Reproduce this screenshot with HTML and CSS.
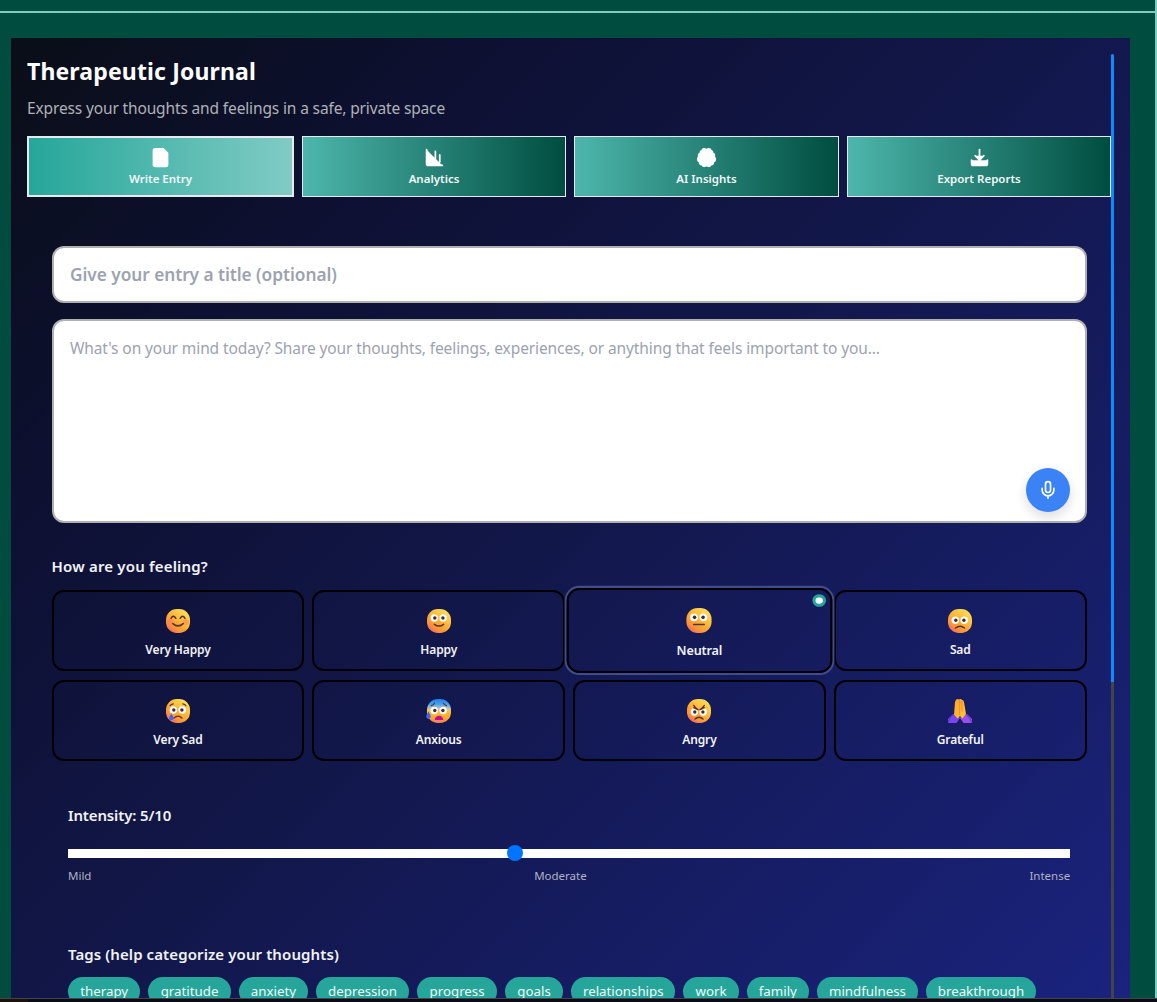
FILE: index.html
```html
<!DOCTYPE html>
<html lang="en">
<head>
<meta charset="utf-8">
<title>Therapeutic Journal</title>
<link rel="stylesheet" href="styles.css">
</head>
<body>
<svg class="defs" width="0" height="0">
  <defs>
    <linearGradient id="skin" x1="0.9" y1="0.05" x2="0.2" y2="1">
      <stop offset="0" stop-color="#ffe45c"/><stop offset="0.5" stop-color="#ffb235"/><stop offset="0.8" stop-color="#fb9038"/><stop offset="1" stop-color="#ee6078"/>
    </linearGradient>
    <linearGradient id="cold" x1="0" y1="0" x2="0" y2="1">
      <stop offset="0" stop-color="#1d80e8"/><stop offset="0.22" stop-color="#4aa0ee"/><stop offset="0.42" stop-color="#c9c9b0"/><stop offset="0.5" stop-color="#ffc02f"/><stop offset="0.8" stop-color="#ffa62f"/><stop offset="1" stop-color="#f2785f"/>
    </linearGradient>
    <linearGradient id="hand" x1="0" y1="0" x2="1" y2="1">
      <stop offset="0" stop-color="#ffa32b"/><stop offset="1" stop-color="#ffc832"/>
    </linearGradient>
    <g id="eyes">
      <circle cx="7.3" cy="9" r="3.7" fill="#fff"/><circle cx="16.2" cy="9" r="3.7" fill="#fff"/>
      <circle cx="7.8" cy="9" r="1.7" fill="#402a32"/><circle cx="15.9" cy="9" r="1.7" fill="#402a32"/>
    </g>
  </defs>
</svg>
<div class="app">
  <div class="topbar"></div>
  <main class="stage">
    <section class="panel">
      <div class="content">
        <h1>Therapeutic Journal</h1>
        <p class="subtitle">Express your thoughts and feelings in a safe, private space</p>
        <nav class="tabs">
          <button class="tab active"><svg viewBox="0 0 24 24"><path d="M15 2H6a2 2 0 0 0-2 2v16a2 2 0 0 0 2 2h12a2 2 0 0 0 2-2V7Z"/></svg><span>Write Entry</span></button>
          <button class="tab"><svg viewBox="0 0 24 24"><path d="M3 3v16a2 2 0 0 0 2 2h16"/><path d="M18 17V9M13 17V5M8 17v-3"/></svg><span>Analytics</span></button>
          <button class="tab"><svg viewBox="0 0 24 24"><path d="M9.5 2A2.5 2.5 0 0 1 12 4.5v15a2.5 2.5 0 0 1-4.96.44 2.5 2.5 0 0 1-2.96-3.08 3 3 0 0 1-.34-5.58 2.5 2.5 0 0 1 1.32-4.24 2.5 2.5 0 0 1 1.98-3A2.5 2.5 0 0 1 9.5 2Z"/><path d="M14.5 2A2.5 2.5 0 0 0 12 4.5v15a2.5 2.5 0 0 0 4.96.44 2.5 2.5 0 0 0 2.96-3.08 3 3 0 0 0 .34-5.58 2.5 2.5 0 0 0-1.32-4.24 2.5 2.5 0 0 0-1.98-3A2.5 2.5 0 0 0 14.5 2Z"/></svg><span>AI Insights</span></button>
          <button class="tab"><svg viewBox="0 0 24 24"><path d="M21 15v4a2 2 0 0 1-2 2H5a2 2 0 0 1-2-2v-4"/><path d="m7 10 5 5 5-5"/><path d="M12 15V3"/></svg><span>Export Reports</span></button>
        </nav>
        <div class="entry">
          <div class="field title-field">Give your entry a title (optional)</div>
          <div class="field body-field">
            <span>What's on your mind today? Share your thoughts, feelings, experiences, or anything that feels important to you...</span>
            <button class="mic" aria-label="Record"><svg viewBox="0 0 24 24"><path d="M12 2a3 3 0 0 0-3 3v7a3 3 0 0 0 6 0V5a3 3 0 0 0-3-3Z"/><path d="M19 10v2a7 7 0 0 1-14 0v-2M12 19v3"/></svg></button>
          </div>
          <h2 class="mood-title">How are you feeling?</h2>
          <div class="moods">
            <button class="mood"><svg viewBox="0 0 24 24"><rect width="24" height="24" rx="10.8" fill="url(#skin)"/><circle cx="4" cy="13" r="3" fill="#ff765d" opacity=".45"/><circle cx="20" cy="13" r="3" fill="#ff765d" opacity=".45"/><path class="ln" d="M5 9.3q2.4-4 4.8 0M14.2 9.3q2.4-4 4.8 0M6.8 14.6q5.2 4.6 10.4 0"/></svg><span>Very Happy</span></button>
            <button class="mood"><svg viewBox="0 0 24 24"><rect width="24" height="24" rx="10.8" fill="url(#skin)"/><use href="#eyes"/><path class="ln" d="M7.4 15.3q4.6 3.6 9.2 0"/></svg><span>Happy</span></button>
            <button class="mood selected"><i class="check"></i><svg viewBox="0 0 24 24"><rect width="24" height="24" rx="10.8" fill="url(#skin)"/><use href="#eyes"/><path class="ln" d="M7 15.8h10"/></svg><span>Neutral</span></button>
            <button class="mood"><svg viewBox="0 0 24 24"><rect width="24" height="24" rx="10.8" fill="url(#skin)"/><use href="#eyes" y="2.3"/><path class="ln" d="M7.5 19q4.5-3.6 9 0"/></svg><span>Sad</span></button>
            <button class="mood"><svg viewBox="0 0 24 24"><rect width="24" height="24" rx="10.8" fill="url(#skin)"/><use href="#eyes" y="2"/><path class="ln thin" d="M4 6.8q1-1.8 3.2-2M20 6.8q-1-1.8-3.2-2M8 19q4-3.6 8 0"/><path d="M5.4 14.5C4.4 16.4 3 17.7 3 19.2c0 2.6 4.6 2.6 4.6 0 0-1.5-1.4-2.7-2.2-4.7Z" fill="#4264f0"/></svg><span>Very Sad</span></button>
            <button class="mood"><svg viewBox="0 0 24 24"><rect width="24" height="24" rx="10.8" fill="url(#cold)"/><use href="#eyes" y="2.5"/><path class="ln thin" d="M4.4 6.7q1.8-.5 3-2.5M19.5 6.7q-1.8-.5-3-2.5"/><path d="M7.8 21a4.2 4.2 0 0 1 8.4 0Z" fill="#c60a91"/><path d="M1.5 12.5C.3 14.8-.8 15.7-.8 17.4c0 3.3 4.6 3.3 4.6 0 0-1.7-1.4-2.9-2.3-4.9Z" fill="#4264f0"/></svg><span>Anxious</span></button>
            <button class="mood"><svg viewBox="0 0 24 24"><rect width="24" height="24" rx="10.8" fill="url(#skin)"/><use href="#eyes" y="4"/><path d="M2 8l8.5 3.2V8H2ZM22 8l-8.5 3.2V8H22Z" fill="#ffb93a"/><path class="ln" d="M7 8.7l4 2M6.8 6.5q1.2 2.6 4.2 4.2M17 8.7l-4 2M17.2 6.5q-1.2 2.6-4.2 4.2M8 20q4-3.6 8 0"/></svg><span>Angry</span></button>
            <button class="mood"><svg viewBox="0 0 24 24"><path d="M0 24v-4l5-5 7 3.5V24Z" fill="#7945ef"/><path d="M24 24v-4l-5-5-7 3.5V24Z" fill="#984ee8"/><path d="M0 24q1-5 5-8M24 24q-2-5-5-8" stroke="#5930d8" fill="none"/><path d="M9.5 19.500 6 15.500 7 3q1-4 4-2.500 1.500-.9 3 .2 2 .3 2.200 3.300L18 15l-3.500 4.500L12 17Z" fill="url(#hand)"/><path d="M11.600 1.200V16M14 1.500v11" stroke="#ef873c" stroke-width=".9" fill="none"/><path d="M8.500 24l3.500-5 3.500 5Z" fill="#171d5e"/></svg><span>Grateful</span></button>
          </div>
          <div class="group intensity">
            <h2>Intensity: 5/10</h2>
            <div class="slider"><i class="thumb"></i></div>
            <div class="scale"><span>Mild</span><span>Moderate</span><span>Intense</span></div>
          </div>
          <div class="group tags-group">
            <h2>Tags (help categorize your thoughts)</h2>
            <div class="tags">
              <span style="width:72.4px">therapy</span><span style="width:82.4px">gratitude</span><span style="width:69.3px">anxiety</span><span style="width:93px">depression</span><span style="width:80px">progress</span><span style="width:58px">goals</span><span style="width:104.4px">relationships</span><span style="width:55.2px">work</span><span style="width:62.3px">family</span><span style="width:101px">mindfulness</span><span style="width:110px">breakthrough</span>
            </div>
          </div>
        </div>
      </div>
      <div class="scrollbar"></div>
    </section>
  </main>
  <footer class="dock"></footer>
</div>
</body>
</html>
```
FILE: styles.css
```css
* { box-sizing: border-box; }
body { margin: 0; background: #004d40; color: #f2f3f7; font-family: "Noto Sans", "Open Sans", sans-serif; overflow: hidden; }
button { font: inherit; color: inherit; background: none; padding: 0; border: 0; }
h1, h2, p { margin: 0; }
.defs { display: block; height: 0; }
.app { height: 1002px; display: flex; flex-direction: column; }
.topbar { height: 13px; flex: none; border-bottom: 2px solid #80cbc4; border-right: 2px solid #80cbc4; }
.stage { height: 985px; flex: none; padding: 25px 25px 0 11px; border-right: 2px solid #80cbc4; }
.panel { height: 960px; padding: 16px 16px 0; display: flex; overflow: hidden; background: linear-gradient(135deg, #0a0e17 0%, #0d1030 22%, #12174a 50%, #1a237e 100%); }
.content { width: 1084px; flex: none; }
.scrollbar { width: 3px; background: linear-gradient(#0a8cff 628px, #444 628px); border-radius: 2px 2px 0 0; }
.dock { height: 4px; flex: none; border-top: 1px solid #454545; background: linear-gradient(90deg, #1c110b 28px, #0a0b18 28px); }

h1 { height: 36px; line-height: 34px; font-size: 23px; font-weight: 700; color: #fff; letter-spacing: .14px; white-space: nowrap; }
.subtitle { height: 46px; padding-top: 6px; font-size: 15.5px; line-height: 24px; color: #b0b1b7; letter-spacing: -.14px; white-space: nowrap; }
.tabs { display: grid; grid-template-columns: 267fr 264fr 265fr 264fr; gap: 8px; height: 61px; }
.tab { display: flex; flex-direction: column; align-items: center; padding-top: 9.5px; border: 1px solid #e6e9ee; background: linear-gradient(90deg, #4db6ac, #004d40); font-size: 11.5px; font-weight: 600; line-height: 20px; color: #f3f8f8; }
.tab.active { border-width: 2px; padding-top: 8.5px; background: linear-gradient(90deg, #26a69a, #80cbc4); }
.tab svg { width: 21px; height: 21px; flex: none; fill: #fff; stroke: #fff; stroke-width: 2; stroke-linecap: round; stroke-linejoin: round; }
.tab span { margin-top: 1.5px; }

.entry { padding: 49px 24.4px 0 24.6px; }
.field { position: relative; border: 2px solid #b0b0b0; border-radius: 12px; background: #fff; color: #9ca3af; padding: 0 16.4px; white-space: nowrap; }
.title-field { height: 57px; line-height: 53px; font-size: 17.3px; font-weight: 600; letter-spacing: -.05px; }
.body-field { height: 204px; margin-top: 16px; padding-top: 15px; font-size: 15.5px; line-height: 24px; letter-spacing: -.1px; }
.mic { position: absolute; right: 14.8px; bottom: 9px; width: 44px; height: 44px; border-radius: 50%; background: #3b82f6; display: grid; place-items: center; box-shadow: 0 5px 12px rgba(0,0,0,.14); }
.mic svg { width: 20px; height: 20px; fill: none; stroke: #fff; stroke-width: 2; stroke-linecap: round; stroke-linejoin: round; }

h2 { font-size: 15px; font-weight: 600; line-height: 24px; white-space: nowrap; letter-spacing: .1px; }
.mood-title { margin-top: 31px; height: 36px; letter-spacing: .18px; }
.moods { display: grid; grid-template-columns: repeat(4, 1fr); grid-auto-rows: 81px; gap: 9px 8px; }
.mood { position: relative; display: flex; flex-direction: column; align-items: center; padding-top: 17px; border: 2px solid #000; border-radius: 12px; font-size: 12px; font-weight: 600; line-height: 18px; letter-spacing: -.15px; }
.mood svg { width: 24px; height: 24px; flex: none; overflow: visible; }
.mood span { margin-top: 8px; }
.ln { fill: none; stroke: #51333b; stroke-width: 1.5; stroke-linecap: round; stroke-linejoin: round; }
.thin { stroke-width: 1.2; }
.selected { transform: scale(1.05); z-index: 1; box-shadow: 0 0 0 2px #424b8c; }
.check { position: absolute; top: 4px; right: 4px; width: 13px; height: 12.4px; border-radius: 50%; border: 3px solid #26a69a; background: #fff; }

.group { padding: 0 16.4px; }
.intensity { padding-top: 42px; }
.intensity h2 { letter-spacing: -.14px; }
.slider { position: relative; height: 9px; margin-top: 22px; background: #fff; }
.thumb { position: absolute; left: 438.8px; top: -4px; width: 16px; height: 16px; border-radius: 50%; background: #0075ff; }
.scale { display: flex; justify-content: space-between; margin-top: 9px; font-size: 11.5px; line-height: 18px; color: #b0b2c3; }
.tags-group { padding-top: 57px; }
.tags { display: flex; gap: 8px; margin-top: 11px; }
.tags span { flex: none; height: 29px; border-radius: 15px; background: #26a69a; color: #eefaf8; font-size: 13.3px; line-height: 28px; text-align: center; white-space: nowrap; }
```
